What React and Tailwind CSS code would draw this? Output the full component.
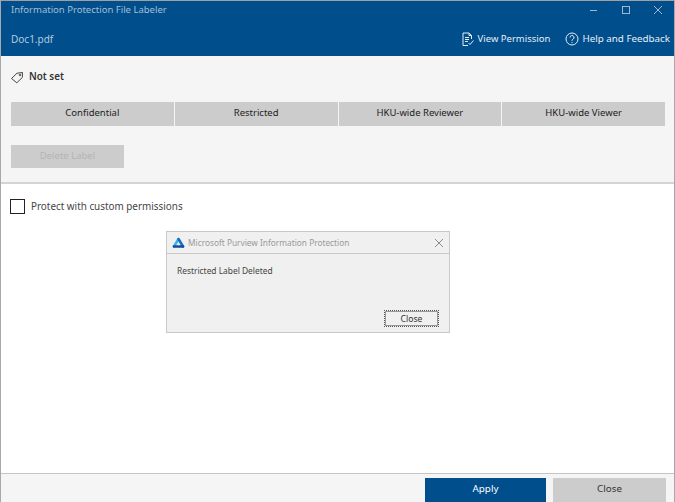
import React from "react";

const labels = ["Confidential", "Restricted", "HKU-wide Reviewer", "HKU-wide Viewer"];

const App = () => {
  return (
    <div className="h-[502px] w-[675px] flex flex-col bg-white border-l border-r border-[#a8a8a8] overflow-hidden font-['Noto_Sans','Open_Sans',sans-serif] text-[9.5px] text-[#333]">
      {/* Title bar */}
      <header className="h-[56px] shrink-0 flex flex-col border-t border-[#a0a0a0] bg-[#004e8c] text-[#b5cbde]">
        <div className="h-[18px] flex items-center justify-between pl-[10px]">
          <span className="text-[9.5px] opacity-90">Information Protection File Labeler</span>
          <div className="flex items-center gap-[22px] pr-[11px] text-[#9db9d2]">
            <svg width="10" height="10" viewBox="0 0 10 10" fill="none" stroke="currentColor">
              <path d="M1 5.500h7" />
            </svg>
            <svg width="10" height="10" viewBox="0 0 10 10" fill="none" stroke="currentColor">
              <rect x="1.500" y="1.500" width="7" height="7" />
            </svg>
            <svg width="10" height="10" viewBox="0 0 10 10" fill="none" stroke="currentColor">
              <path d="M1 1l8 8M9 1l-8 8" />
            </svg>
          </div>
        </div>
        <div className="flex-1 flex items-center justify-between pl-[10px] pr-[4px] pt-[3px]">
          <span className="text-[10px]">Doc1.pdf</span>
          <div className="flex items-center gap-[15px] text-[#e6eef5] text-[9.8px]">
            <span className="flex items-center gap-[4px]">
              <svg width="12" height="15" viewBox="0 0 12 15" fill="none" stroke="currentColor" strokeWidth="1">
                <path d="M6 13.500H1V1h6l2.500 2.500V7" />
                <path d="M7 1v2.500h2.500" />
                <path d="M3 5.500h4M3 7.500h4M3 9.500h3" />
                <path d="M6.500 11l1.500 1.500 3.500-4" />
              </svg>
              <span className="text-[9.5px]">View Permission</span>
            </span>
            <span className="flex items-center gap-[3px]">
              <svg width="14" height="14" viewBox="0 0 14 14" fill="none" stroke="currentColor" strokeWidth="1">
                <circle cx="7" cy="7" r="6" />
                <path d="M5 5.500a2 2 0 1 1 3 1.700c-.7.400-1 .8-1 1.600" />
                <path d="M7 10v1" />
              </svg>
              Help and Feedback
            </span>
          </div>
        </div>
      </header>

      {/* Label section */}
      <section className="h-[128px] shrink-0 flex flex-col bg-[#f5f5f5] border-b-2 border-[#d4d4d4] pl-[10px] pr-[9px]">
        <div className="h-[42px] -ml-[1px] flex items-center gap-[5px]">
          <svg width="14" height="13" viewBox="0 0 14 13" fill="none" stroke="#444" strokeWidth="1">
            <path d="M1.500 7.500L7 2.200 12.500 1.500 12.300 6.500 6.800 11.800z" strokeLinejoin="round" />
            <circle cx="10" cy="4" r="0.800" />
          </svg>
          <span className="font-semibold text-[9.8px]">Not set</span>
        </div>
        <div className="mt-[4px] grid grid-cols-4 gap-[1px]">
          {labels.map((label) => (
            <div
              key={label}
              className="h-[24px] pb-[1px] flex items-center justify-center bg-[#cccccc] text-[9.5px] text-[#222]"
            >
              {label}
            </div>
          ))}
        </div>
        <div className="mt-[19px] w-[113px] h-[23px] flex items-center justify-center bg-[#cccccc] text-[#b4b4b4] text-[9.5px]">
          Delete Label
        </div>
      </section>

      {/* Main content */}
      <main className="relative flex-1 bg-white">
        <div className="flex items-center gap-[6px] pl-[9px] pt-[15px]">
          <div className="w-[15px] h-[15px] border border-[#222] bg-white" />
          <span className="text-[9.9px] text-[#444]">Protect with custom permissions</span>
        </div>

        {/* Dialog */}
        <div className="absolute left-[165px] top-[47px] w-[284px] h-[102px] flex flex-col border border-[#c8c8c8] bg-[#f0f0f0]">
          <div className="h-[22px] pt-[1px] flex items-center justify-between pl-[5px] pr-[5px] border-b border-[#c8c8c8]">
            <div className="flex items-center gap-[3px]">
              <svg width="13" height="12" viewBox="0 0 13 12" fill="none" strokeWidth="2.600" strokeLinecap="round">
                <path d="M6.500 2L2 9.500" stroke="#35b8e8" />
                <path d="M6.500 2L11 9.500" stroke="#1a6fc4" />
                <path d="M2 9.500H11" stroke="#0f4f9c" />
              </svg>
              <span className="text-[8.3px] text-[#9a9a9a]">Microsoft Purview Information Protection</span>
            </div>
            <svg width="10" height="10" viewBox="0 0 10 10" fill="none" stroke="#8c8c8c">
              <path d="M1 1l8 8M9 1l-8 8" />
            </svg>
          </div>
          <div className="flex-1 flex flex-col pl-[10px] pr-[10px] pt-[11px] pb-[5px]">
            <span className="text-[8.4px] text-[#444]">Restricted Label Deleted</span>
            <div className="mt-auto self-end w-[55px] h-[17px] pt-[1px] flex items-center justify-center border border-[#555] border-dotted outline outline-1 outline-[#999] -outline-offset-2 bg-[#f0f0f0] text-[8.6px] text-[#333]">
              Close
            </div>
          </div>
        </div>
      </main>

      {/* Footer */}
      <footer className="h-[29px] shrink-0 flex justify-end gap-[7px] pt-[4px] pr-[8px] bg-[#f5f5f5] border-t border-[#c4c4c4]">
        <div className="w-[121px] pb-[1px] flex items-center justify-center bg-[#004e8c] text-white text-[9.8px]">Apply</div>
        <div className="w-[113px] pb-[1px] flex items-center justify-center bg-[#cccccc] text-[#333] text-[9.8px]">Close</div>
      </footer>
    </div>
  );
};

export default App;
